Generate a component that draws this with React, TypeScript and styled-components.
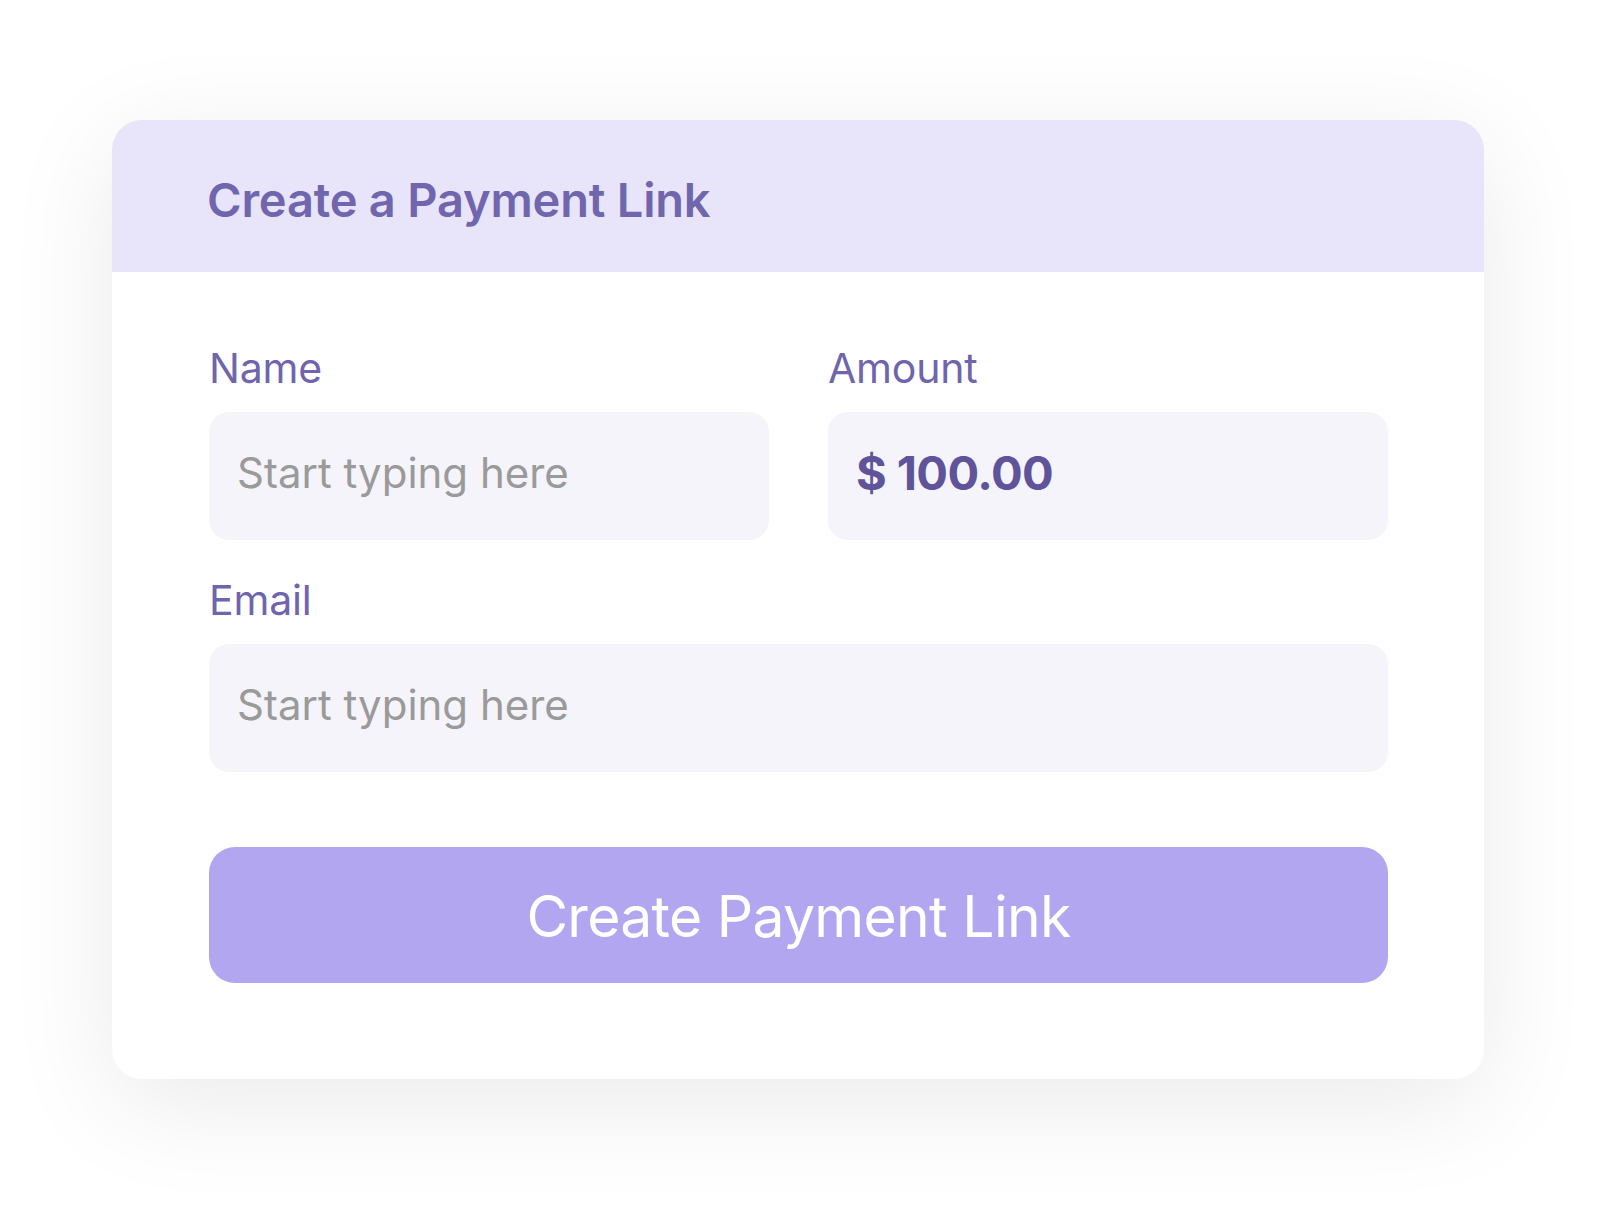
import React from "react";
import styled, { createGlobalStyle } from "styled-components";

const GlobalStyle = createGlobalStyle`
  * { box-sizing: border-box; }
  html, body { margin: 0; padding: 0; background: #ffffff; }
  body { font-family: Inter, "Noto Sans", sans-serif; }
`;

const Page = styled.div`
  width: 1612px;
  min-height: 1216px;
  padding: 120px 128px 137px 112px;
  background: #ffffff;
`;

const Card = styled.div`
  width: 1372px;
  height: 959px;
  border-radius: 30px;
  background: #ffffff;
  overflow: hidden;
  box-shadow: 0 24px 110px rgba(0, 0, 0, 0.085);
  display: flex;
  flex-direction: column;
`;

const Header = styled.div`
  height: 152px;
  background: #e8e4fa;
  display: flex;
  align-items: center;
  padding: 6px 0 0 95px;
`;

const Title = styled.h1`
  margin: 0;
  font-family: Inter, sans-serif;
  font-size: 47px;
  font-weight: 600;
  letter-spacing: -0.2px;
  color: #7066ad;
`;

const Body = styled.div`
  padding: 70px 96px 95px 97px;
  display: flex;
  flex-direction: column;
`;

const Row = styled.div`
  display: grid;
  grid-template-columns: 560px 560px;
  column-gap: 59px;
`;

const Field = styled.label<{ $mb?: number }>`
  display: flex;
  flex-direction: column;
  gap: 18px;
  margin-bottom: ${(p) => p.$mb ?? 0}px;
`;

const LabelText = styled.span`
  font-family: Inter, sans-serif;
  font-size: 41px;
  line-height: 52px;
  font-weight: 400;
  letter-spacing: -0.2px;
  color: #6f65ad;
`;

const Input = styled.input<{ $strong?: boolean }>`
  width: 100%;
  height: 128px;
  border: none;
  outline: none;
  border-radius: 20px;
  background: #f5f4fb;
  padding: 0 28px 8px;
  font-family: Inter, sans-serif;
  font-size: ${(p) => (p.$strong ? "47px" : "42px")};
  font-weight: ${(p) => (p.$strong ? 700 : 400)};
  letter-spacing: ${(p) => (p.$strong ? "-0.6px" : "0px")};
  color: #5f5399;
  &::placeholder {
    color: #9a9a9a;
    opacity: 1;
  }
`;

const Button = styled.button`
  margin-top: 75px;
  height: 136px;
  width: 100%;
  border: none;
  border-radius: 26px;
  background: #b3a6f1;
  color: #ffffff;
  font-family: Inter, sans-serif;
  font-size: 57px;
  font-weight: 400;
  letter-spacing: -0.7px;
  cursor: pointer;
  padding: 2px 0 0;
`;

export default function App() {
  return (
    <>
      <GlobalStyle />
      <Page>
        <Card>
          <Header>
            <Title>Create a Payment Link</Title>
          </Header>
          <Body>
            <Row>
              <Field $mb={34}>
                <LabelText>Name</LabelText>
                <Input placeholder="Start typing here" />
              </Field>
              <Field $mb={34}>
                <LabelText>Amount</LabelText>
                <Input $strong defaultValue="$ 100.00" />
              </Field>
            </Row>
            <Field>
              <LabelText>Email</LabelText>
              <Input placeholder="Start typing here" />
            </Field>
            <Button type="button">Create Payment Link</Button>
          </Body>
        </Card>
      </Page>
    </>
  );
}
